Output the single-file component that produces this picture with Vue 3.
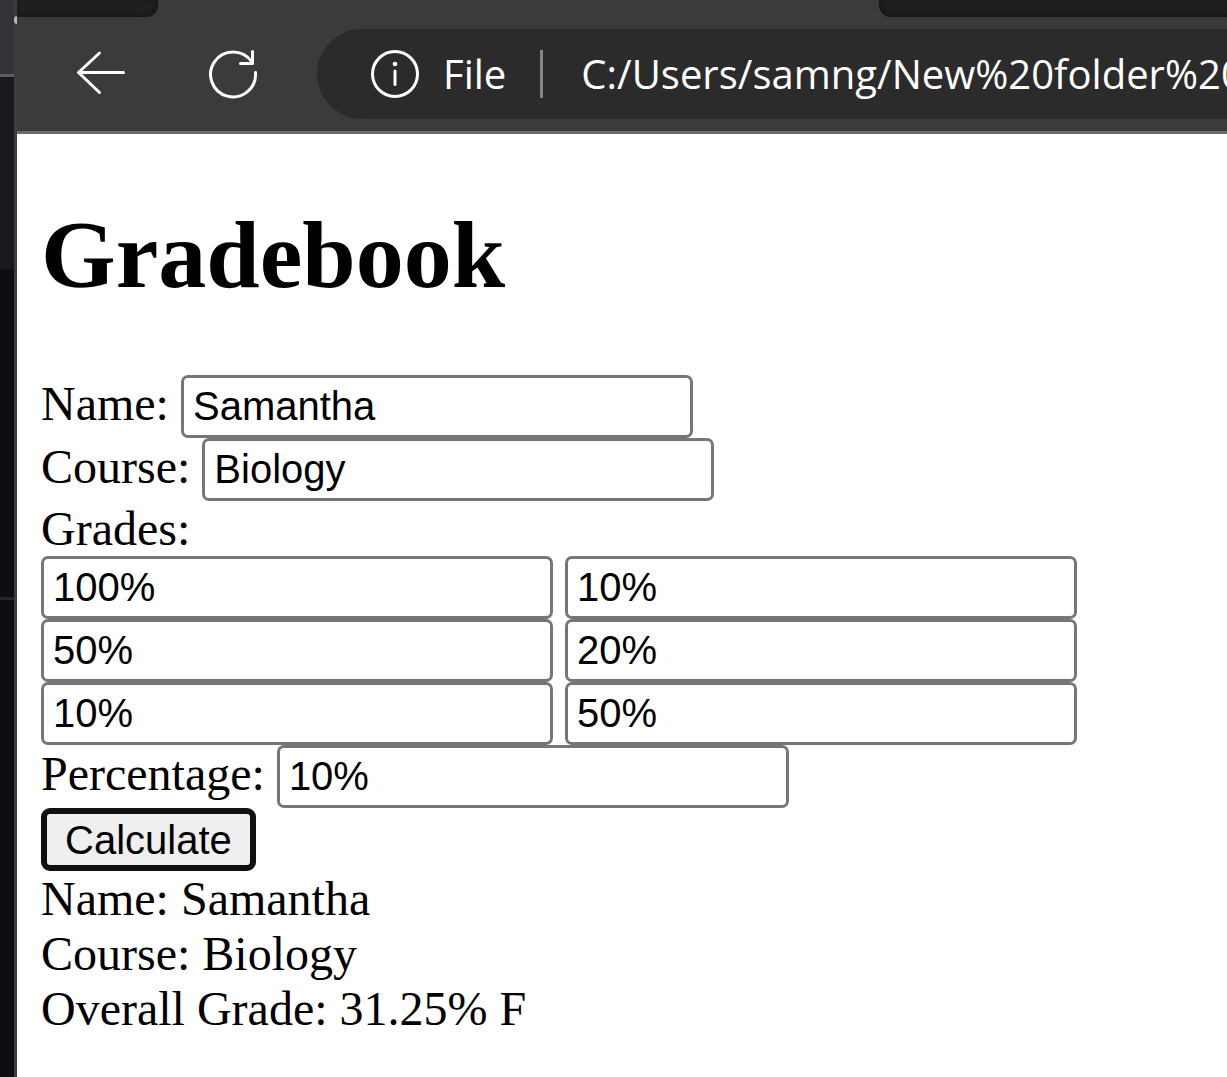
<script setup>
import { ref } from 'vue'

const name = ref('Samantha')
const course = ref('Biology')
const percentage = ref('10%')
const grades = ref([
  { score: '100%', weight: '10%' },
  { score: '50%', weight: '20%' },
  { score: '10%', weight: '50%' },
])
const url = ref('C:/Users/samng/New%20folder%20')
</script>

<template>
  <div class="desktop">
    <aside class="behind">
      <div class="behind-head"></div>
      <div class="behind-top"></div>
      <div class="behind-mid"></div>
      <div class="behind-low"></div>
      <span class="speck"></span>
    </aside>
    <div class="window">
      <header class="chrome">
        <div class="tabs">
          <div class="tab tab-left"></div>
          <div class="tab tab-right"></div>
        </div>
        <nav class="toolbar">
          <button class="tool" type="button" aria-label="Back">
            <svg viewBox="0 0 54 54" width="54" height="54">
              <path d="M49.5 25.5H4.5M25.5 6L4.5 25.5L25.5 45.5" />
            </svg>
          </button>
          <button class="tool" type="button" aria-label="Refresh">
            <svg viewBox="0 0 54 54" width="54" height="54">
              <path d="M49.5 25.5A22.5 22.5 0 1 1 45.5 14.5M46.5 4.500V16.500H34.500" />
            </svg>
          </button>
          <div class="address">
            <svg class="info" viewBox="0 0 48 48" width="48" height="48">
              <circle cx="24" cy="24" r="22.5" />
              <path d="M24 21V34.500" />
              <circle class="dot" cx="24" cy="14" r="2.3" />
            </svg>
            <span class="scheme">File</span>
            <span class="divider"></span>
            <input v-model="url" class="url" aria-label="Address" />
          </div>
        </nav>
      </header>
      <main class="page">
        <h1>Gradebook</h1>
        <div class="row">
          <label for="name">Name:</label>
          <input id="name" v-model="name" class="field" />
        </div>
        <div class="row">
          <label for="course">Course:</label>
          <input id="course" v-model="course" class="field" />
        </div>
        <div>Grades:</div>
        <div v-for="(g, i) in grades" :key="i" class="row">
          <input v-model="g.score" class="field" :aria-label="`Grade ${i + 1}`" />
          <input v-model="g.weight" class="field" :aria-label="`Weight ${i + 1}`" />
        </div>
        <div class="row">
          <label for="percentage">Percentage:</label>
          <input id="percentage" v-model="percentage" class="field" />
        </div>
        <button class="calculate" type="button">Calculate</button>
        <div>Name: Samantha</div>
        <div>Course: Biology</div>
        <div>Overall Grade: 31.25% F</div>
      </main>
    </div>
  </div>
</template>

<style>
body {
  margin: 0;
}
</style>

<style scoped>
.desktop {
  display: flex;
  min-height: 100vh;
  overflow: hidden;
  background: #fff;
}
.behind {
  position: relative;
  flex: none;
  display: flex;
  flex-direction: column;
  box-sizing: border-box;
  width: 17px;
  border-right: 3px solid #3c3c3f;
  background: #0d0e12;
}
.behind-head {
  height: 74px;
  background: #323338;
  border-bottom: 3px solid #5c5d60;
}
.behind-top {
  height: 192px;
  background: #17191e;
}
.behind-mid {
  height: 328px;
  border-bottom: 3px solid #24262c;
}
.behind-low {
  flex: 1;
}
.speck {
  position: absolute;
  top: 16px;
  right: -3px;
  width: 3px;
  height: 8px;
  border-radius: 3px 0 0 3px;
  background: #b4b4b4;
}
.window {
  flex: 1;
  min-width: 0;
}
.chrome {
  background: #3b3b3b;
  border-bottom: 3px solid #6b6969;
}
.tabs {
  display: flex;
  justify-content: space-between;
  height: 17px;
}
.tab {
  background: #202020;
}
.tab-left {
  width: 141px;
  border-radius: 0 0 12px 0;
  box-shadow: inset -3px -2px 5px #181818;
}
.tab-right {
  width: 348px;
  border-radius: 0 0 0 12px;
  box-shadow: inset 3px -2px 5px #181818;
}
.toolbar {
  display: flex;
  align-items: center;
  padding: 12px 0 12px 57px;
}
.tool {
  flex: none;
  display: flex;
  margin: 0 78px 0 0;
  padding: 0;
  border: 0;
  background: none;
}
.tool + .address {
  margin-left: -21px;
}
svg {
  fill: none;
  stroke: #fff;
  stroke-width: 3;
  stroke-linecap: round;
  stroke-linejoin: round;
}
.dot {
  fill: #fff;
  stroke: none;
}
.info {
  flex: none;
}
.address {
  flex: 1;
  min-width: 0;
  display: flex;
  align-items: center;
  box-sizing: border-box;
  height: 90px;
  padding-left: 54px;
  border-radius: 45px 0 0 45px;
  background: #2b2b2b;
  color: #fff;
  font: 40px/54px "Open Sans", "Noto Sans", sans-serif;
}
.scheme {
  margin-left: 24px;
}
.divider {
  flex: none;
  width: 3px;
  height: 48px;
  margin: 0 38px 0 34px;
  background: #858585;
}
.url {
  flex: 1;
  min-width: 0;
  padding: 0;
  border: 0;
  outline: 0;
  background: none;
  color: inherit;
  font: inherit;
}
.page {
  padding: 66px 24px 24px;
  color: #000;
  font: 48px/55px "Liberation Serif", "Times New Roman", serif;
}
h1 {
  margin: 0 0 65px;
  font-size: 96px;
  line-height: 110px;
}
.row {
  display: flex;
  align-items: baseline;
  gap: 12px;
}
.field {
  box-sizing: border-box;
  width: 512px;
  height: 63px;
  padding: 3px 9px;
  border: 3px solid #767676;
  border-radius: 7px;
  background: #fff;
  color: #000;
  font: 40px/46px "Liberation Sans", Arial, sans-serif;
}
.calculate {
  display: block;
  box-sizing: border-box;
  height: 63px;
  padding: 0 18px;
  border: 6px solid #101010;
  border-radius: 9px;
  background: #efefef;
  color: #000;
  font: 40px/46px "Liberation Sans", Arial, sans-serif;
}
</style>
